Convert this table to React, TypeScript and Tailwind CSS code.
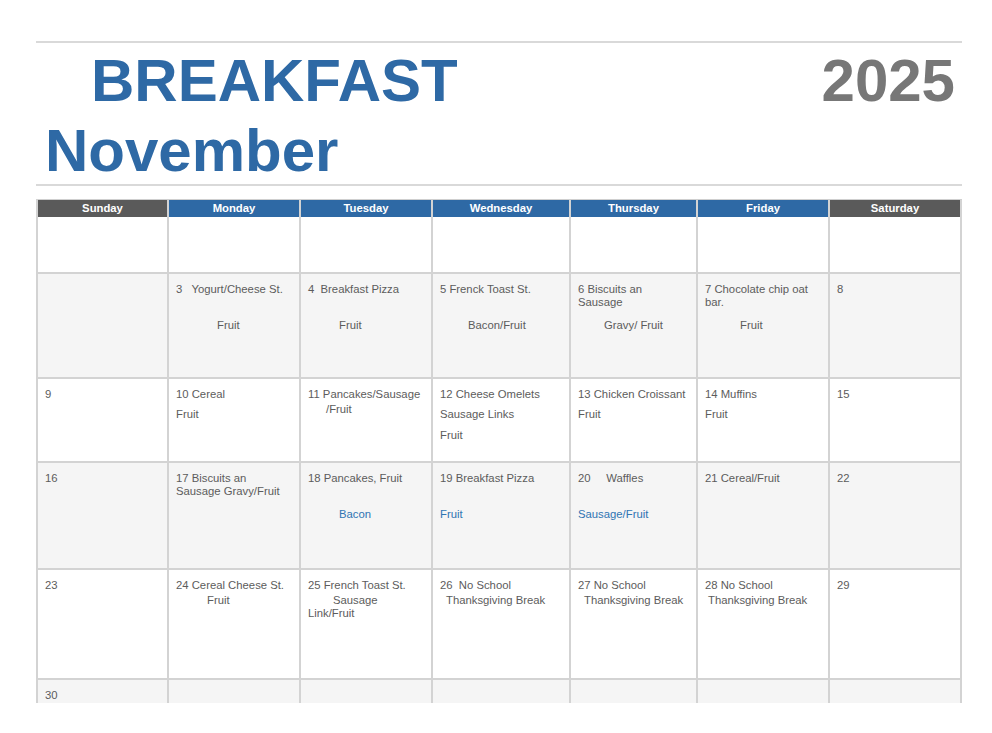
import React from "react";

type Line = { t: string; pl?: number; mt?: number; blue?: boolean };

const COLS = "grid grid-cols-[131px_132px_132px_138px_127px_132px_132px]";

const days = ["Sunday", "Monday", "Tuesday", "Wednesday", "Thursday", "Friday", "Saturday"];

const weeks: { h: string; bg: string; cells: Line[][] }[] = [
  { h: "h-[57px]", bg: "bg-white", cells: [[], [], [], [], [], [], []] },
  {
    h: "h-[105px]",
    bg: "bg-[#f5f5f5]",
    cells: [
      [],
      [{ t: "3   Yogurt/Cheese St." }, { t: "Fruit", pl: 41, mt: 23 }],
      [{ t: "4  Breakfast Pizza" }, { t: "Fruit", pl: 31, mt: 23 }],
      [{ t: "5 Frenck Toast St." }, { t: "Bacon/Fruit", pl: 28, mt: 23 }],
      [{ t: "6 Biscuits an" }, { t: "Sausage" }, { t: "Gravy/ Fruit", pl: 26, mt: 10 }],
      [{ t: "7 Chocolate chip oat" }, { t: "bar." }, { t: "Fruit", pl: 35, mt: 10 }],
      [{ t: "8" }],
    ],
  },
  {
    h: "h-[84px]",
    bg: "bg-white",
    cells: [
      [{ t: "9" }],
      [{ t: "10 Cereal" }, { t: "Fruit", mt: 7 }],
      [{ t: "11 Pancakes/Sausage" }, { t: "/Fruit", pl: 18, mt: 2 }],
      [{ t: "12 Cheese Omelets" }, { t: "Sausage Links", mt: 7 }, { t: "Fruit", mt: 8 }],
      [{ t: "13 Chicken Croissant" }, { t: "Fruit", mt: 7 }],
      [{ t: "14 Muffins" }, { t: "Fruit", mt: 7 }],
      [{ t: "15" }],
    ],
  },
  {
    h: "h-[107px]",
    bg: "bg-[#f5f5f5]",
    cells: [
      [{ t: "16" }],
      [{ t: "17 Biscuits an" }, { t: "Sausage Gravy/Fruit" }],
      [{ t: "18 Pancakes, Fruit" }, { t: "Bacon", pl: 31, mt: 23, blue: true }],
      [{ t: "19 Breakfast Pizza" }, { t: "Fruit", mt: 23, blue: true }],
      [{ t: "20     Waffles" }, { t: "Sausage/Fruit", mt: 23, blue: true }],
      [{ t: "21 Cereal/Fruit" }],
      [{ t: "22" }],
    ],
  },
  {
    h: "h-[110px]",
    bg: "bg-white",
    cells: [
      [{ t: "23" }],
      [{ t: "24 Cereal Cheese St." }, { t: "Fruit", pl: 31, mt: 2 }],
      [{ t: "25 French Toast St." }, { t: "Sausage", pl: 25, mt: 2 }, { t: "Link/Fruit" }],
      [{ t: "26  No School" }, { t: "Thanksgiving Break", pl: 6, mt: 2 }],
      [{ t: "27 No School" }, { t: "Thanksgiving Break", pl: 6, mt: 2 }],
      [{ t: "28 No School" }, { t: "Thanksgiving Break", pl: 3, mt: 2 }],
      [{ t: "29" }],
    ],
  },
];

function Cell({ lines }: { lines: Line[] }) {
  return (
    <div className="border-r-2 border-[#d3d3d3] pl-[7px] pt-[9px] text-[11.3px] leading-[13px] text-[#5c5c5c]">
      {lines.map((l, i) => (
        <div
          key={i}
          className={`whitespace-pre ${l.blue ? "text-[#2f74b3]" : ""}`}
          style={{ paddingLeft: l.pl ?? 0, marginTop: l.mt ?? 0 }}
        >
          {l.t}
        </div>
      ))}
    </div>
  );
}

export default function App() {
  return (
    <div
      className="w-[992px] h-[733px] bg-white overflow-hidden"
      style={{ fontFamily: '"Liberation Sans", Arial, sans-serif' }}
    >
      <div className="mx-[36px] w-[926px] pt-[41px]">
        <div className="h-[2px] bg-[#d9d9d9]" />
        <div className="mt-[8px] flex justify-between text-[60px] font-bold leading-[60px]">
          <span className="ml-[55px] text-[#2e69a5]">BREAKFAST</span>
          <span className="mr-[7px] text-[#777777]">2025</span>
        </div>
        <div className="mt-[10px] ml-[9px] text-[60px] font-bold leading-[60px] text-[#2e69a5]">
          November
        </div>
        <div className="mt-[3px] h-[2px] bg-[#d9d9d9]" />
        <div className="mt-[13px] h-[504px] w-[926px] overflow-hidden border-l-2 border-[#d3d3d3]">
          <div className={`${COLS} h-[18px] border-t border-[#cfcfcf]`}>
            {days.map((d, i) => (
              <div
                key={d}
                className={`flex items-center justify-center border-r-2 border-[#d3d3d3] text-[11.3px] font-bold text-white ${
                  i === 0 || i === 6 ? "bg-[#5a5a5a]" : "bg-[#2e69a5]"
                }`}
              >
                {d}
              </div>
            ))}
          </div>
          {weeks.map((w, wi) => (
            <div key={wi} className={`${COLS} ${w.h} ${w.bg} border-b-2 border-[#d3d3d3]`}>
              {w.cells.map((c, ci) => (
                <Cell key={ci} lines={c} />
              ))}
            </div>
          ))}
          <div className={`${COLS} h-[40px] bg-[#f5f5f5]`}>
            <Cell lines={[{ t: "30" }]} />
            {[0, 1, 2, 3, 4, 5].map((i) => (
              <Cell key={i} lines={[]} />
            ))}
          </div>
        </div>
      </div>
    </div>
  );
}
